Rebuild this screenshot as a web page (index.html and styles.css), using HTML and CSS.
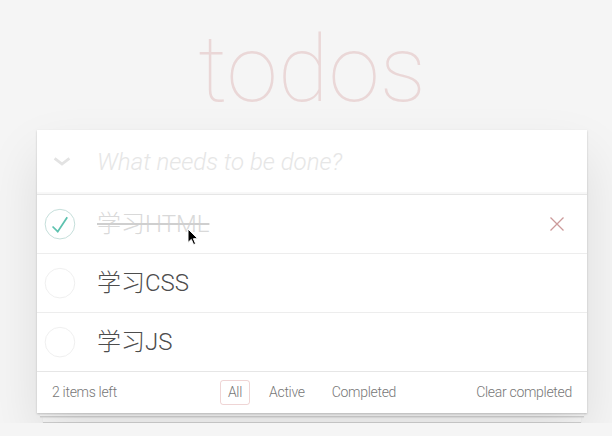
FILE: index.html
```html
<!DOCTYPE html>
<html lang="zh">
<head>
<meta charset="utf-8">
<title>todos</title>
<link rel="stylesheet" href="styles.css">
</head>
<body>
<div class="page">
  <header class="masthead"><h1 class="title">todos</h1></header>
  <section class="todoapp">
    <div class="new-row">
      <span class="toggle-all">
        <svg width="18" height="9" viewBox="0 0 18 9"><path d="M1.6 1.4 L9 7 L16.4 1.4" fill="none" stroke="#e3e3e3" stroke-width="2.8" stroke-linejoin="miter"/></svg>
      </span>
      <input class="new-todo" placeholder="What needs to be done?">
    </div>
    <ul class="todo-list">
      <li class="todo completed">
        <svg class="toggle" viewBox="-10 -18 100 135"><circle cx="50" cy="50" r="50" fill="none" stroke="#bddad5" stroke-width="3"/><path fill="#5dc2af" d="M72 25L42 71 27 56l-4 4 20 20 34-52z"/></svg>
        <span class="label">学习HTML</span>
        <svg class="destroy" viewBox="0 0 40 40"><path d="M13.5 13.5 L26.5 26.5 M26.5 13.5 L13.5 26.5" stroke="#cc9a9a" stroke-width="1.3" fill="none"/></svg>
        <svg class="cursor" width="12" height="18" viewBox="0 0 12 18"><path d="M1 1 L1 14.5 L4.3 11.4 L6.6 16.6 L8.6 15.7 L6.4 10.7 L10.8 10.7 Z" fill="#000" stroke="#fff" stroke-width="1"/></svg>
      </li>
      <li class="todo">
        <svg class="toggle" viewBox="-10 -18 100 135"><circle cx="50" cy="50" r="50" fill="none" stroke="#ededed" stroke-width="3"/></svg>
        <span class="label">学习CSS</span>
      </li>
      <li class="todo">
        <svg class="toggle" viewBox="-10 -18 100 135"><circle cx="50" cy="50" r="50" fill="none" stroke="#ededed" stroke-width="3"/></svg>
        <span class="label">学习JS</span>
      </li>
    </ul>
    <footer class="footer">
      <span class="count">2 items left</span>
      <nav class="filters">
        <a class="filter selected">All</a>
        <a class="filter">Active</a>
        <a class="filter">Completed</a>
      </nav>
      <span class="clear">Clear completed</span>
    </footer>
  </section>
  <div class="sheet sheet-one"></div>
  <div class="sheet sheet-two"></div>
</div>
</body>
</html>
```

FILE: styles.css
```css
html, body {
  margin: 0;
  padding: 0;
}

body {
  background: #f5f5f5;
  color: #4d4d4d;
  font-family: Roboto, "Helvetica Neue", "Noto Sans CJK SC", sans-serif;
  font-size: 14px;
  font-weight: 300;
  line-height: 1.4;
}

.page {
  width: 550px;
  margin-left: 37px;
}

.masthead {
  height: 130px;
  box-sizing: border-box;
  padding-top: 20px;
}

.title {
  margin: 0;
  text-align: center;
  font-size: 93px;
  line-height: 100px;
  font-weight: 100;
  color: rgba(175, 47, 47, 0.15);
}

.todoapp {
  position: relative;
  z-index: 2;
  background: #fff;
  box-shadow: 0 1px 2px 0 rgba(0, 0, 0, 0.2), 0 25px 50px 0 rgba(0, 0, 0, 0.1);
}

.new-row {
  display: flex;
  align-items: center;
  height: 64px;
  box-shadow: inset 0 -2px 1px rgba(0, 0, 0, 0.03);
}

.toggle-all {
  flex: none;
  width: 44px;
  padding-left: 16px;
  padding-bottom: 2px;
  display: flex;
}

.new-todo {
  flex: 1;
  min-width: 0;
  border: 0;
  outline: 0;
  margin: 0;
  padding: 0 16px 0 0;
  font-family: inherit;
  font-weight: 300;
  font-size: 24px;
  background: transparent;
  color: inherit;
}

.new-todo::placeholder {
  font-style: italic;
  font-weight: 300;
  color: #e6e6e6;
}

.todo-list {
  list-style: none;
  margin: 0;
  padding: 0;
  border-top: 1px solid #e6e6e6;
}

.todo {
  position: relative;
  display: flex;
  align-items: center;
  height: 58px;
  border-bottom: 1px solid #ededed;
  font-size: 24px;
}

.todo:last-child {
  border-bottom: none;
}

.toggle {
  flex: none;
  width: 40px;
  height: 40px;
}

.label {
  flex: 1;
  padding-left: 20px;
  line-height: 1.2;
}

.completed .label {
  color: #d9d9d9;
  text-decoration: line-through;
  text-decoration-color: #cfcfcf;
}

.destroy {
  flex: none;
  width: 40px;
  height: 40px;
  margin-right: 10px;
}

.cursor {
  position: absolute;
  left: 150px;
  top: 33px;
}

.footer {
  display: grid;
  grid-template-columns: 1fr auto 1fr;
  align-items: center;
  height: 41px;
  padding: 0 15px;
  border-top: 1px solid #e6e6e6;
  color: #777;
  letter-spacing: -0.3px;
}

.count {
  justify-self: start;
}

.filters {
  display: flex;
  gap: 11px;
}

.filter {
  padding: 2px 7px;
  border: 1px solid transparent;
  border-radius: 3px;
}

.filter.selected {
  border-color: rgba(175, 47, 47, 0.2);
}

.clear {
  justify-self: end;
}

.sheet {
  background: #f8f8f8;
  border-bottom: 1px solid #d2d2d2;
  box-shadow: 0 1px 1px rgba(0, 0, 0, 0.08);
}

.sheet-one {
  position: relative;
  z-index: 1;
  height: 3px;
  margin: 0 3px;
}

.sheet-two {
  height: 5px;
  margin: 0 6px;
}
```
